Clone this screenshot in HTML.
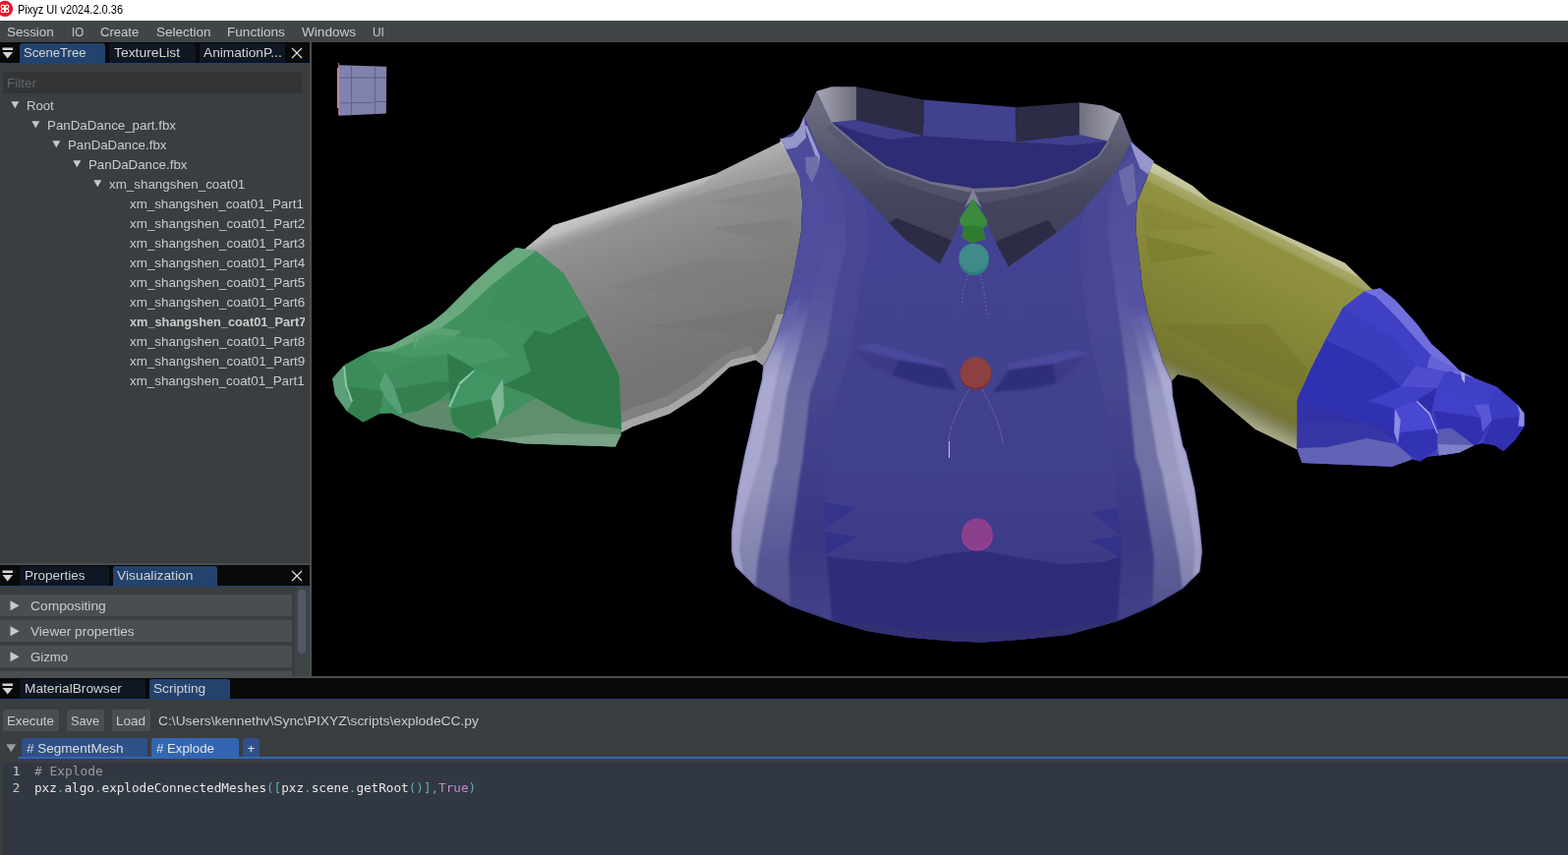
<!DOCTYPE html>
<html><head><meta charset="utf-8"><title>Pixyz UI v2024.2.0.36</title>
<style>
html,body{margin:0;padding:0;background:#3a3e41;}
body{width:1595px;height:870px;position:relative;overflow:hidden;font-family:"Liberation Sans",sans-serif;font-size:14px;color:#cacaca;}
.abs{position:absolute;}
.t{position:absolute;white-space:nowrap;line-height:20px;height:20px;}
#title{left:0;top:0;width:1595px;height:21px;background:#fff;}
#menu{left:0;top:21px;width:1595px;height:22px;background:#404648;}
.tabbar{background:#090909;}
.tab{position:absolute;border-radius:3px 3px 0 0;}
.tab.on{background:#23426d;}
.tab.off{background:#0f1723;}
.line{background:#23426d;}
.panel{background:#3a3e41;}
.sep{background:#4b4e50;}
.hdr{position:absolute;left:0;width:297px;height:22px;background:#4a4e51;border-radius:0 2px 2px 0;}
.btn{position:absolute;top:722px;height:22px;background:#4a4e51;border-radius:2px;}
.tri{position:absolute;width:0;height:0;}
</style></head>
<body>
<div id="title" class="abs"></div>
<svg class="abs" style="left:0;top:0" width="15" height="19" viewBox="0 0 15 19"><circle cx="5" cy="8.9" r="8.1" fill="#e8142c"/><g fill="none" stroke="#fff" stroke-width="1.15"><circle cx="2.9" cy="6.8" r="1.75"/><circle cx="7.1" cy="6.8" r="1.75"/><circle cx="2.9" cy="11" r="1.75"/><circle cx="7.1" cy="11" r="1.75"/><path d="M4.1 8 L5.9 9.8 M5.9 8 L4.1 9.8"/></g></svg>
<div class="t" id="t0" style="left:18.2px;top:0.0px;font-size:12px;color:#000;transform-origin:0 50%;transform:scaleX(0.9166);">Pixyz UI v2024.2.0.36</div>
<div id="menu" class="abs"></div>
<div class="t" id="t1" style="left:7.1px;top:22.6px;font-size:13px;color:#cacaca;transform-origin:0 50%;transform:scaleX(1.0335);">Session</div>
<div class="t" id="t2" style="left:72.6px;top:22.6px;font-size:13px;color:#cacaca;transform-origin:0 50%;transform:scaleX(0.8810);">IO</div>
<div class="t" id="t3" style="left:102.4px;top:22.6px;font-size:13px;color:#cacaca;transform-origin:0 50%;transform:scaleX(1.0043);">Create</div>
<div class="t" id="t4" style="left:158.5px;top:22.6px;font-size:13px;color:#cacaca;transform-origin:0 50%;transform:scaleX(1.0358);">Selection</div>
<div class="t" id="t5" style="left:231.4px;top:22.6px;font-size:13px;color:#cacaca;transform-origin:0 50%;transform:scaleX(1.0448);">Functions</div>
<div class="t" id="t6" style="left:307.2px;top:22.6px;font-size:13px;color:#cacaca;transform-origin:0 50%;transform:scaleX(1.0445);">Windows</div>
<div class="t" id="t7" style="left:379.3px;top:22.6px;font-size:13px;color:#cacaca;transform-origin:0 50%;transform:scaleX(0.9077);">UI</div>
<div class="abs tabbar" style="left:0;top:43px;width:315px;height:21px"></div>
<div class="abs line" style="left:0;top:64px;width:315px;height:1px"></div>
<svg class="abs" style="left:2px;top:48px" width="12" height="13" viewBox="0 0 12 13"><rect x="0.5" y="0.5" width="10.5" height="2.5" fill="#d4d4d4"/><path d="M0.5 5 L11 5 L5.75 11.5 Z" fill="#d4d4d4"/></svg>
<div class="tab on" style="left:20px;top:44px;width:87px;height:20px"></div>
<div class="t" id="t8" style="left:24.2px;top:44.3px;font-size:13px;color:#d2d2d2;transform-origin:0 50%;transform:scaleX(1.0062);">SceneTree</div>
<div class="tab off" style="left:111px;top:44px;width:88px;height:20px"></div>
<div class="t" id="t9" style="left:115.5px;top:44.3px;font-size:13px;color:#d2d2d2;transform-origin:0 50%;transform:scaleX(1.0672);">TextureList</div>
<div class="tab off" style="left:203px;top:44px;width:87px;height:20px"></div>
<div class="t" id="t10" style="left:207.3px;top:44.3px;font-size:13px;color:#d2d2d2;transform-origin:0 50%;transform:scaleX(1.0537);">AnimationP...</div>
<svg class="abs" style="left:295px;top:47px" width="14" height="14" viewBox="0 0 14 14"><path d="M2 2 L12 12 M12 2 L2 12" stroke="#e8e8e8" stroke-width="1.1" fill="none"/></svg>
<div class="abs" style="left:3px;top:73px;width:304px;height:22px;background:#323436;border-radius:2px"></div>
<div class="t" id="t11" style="left:7px;top:74.5px;font-size:13px;color:#616466;transform-origin:0 50%;transform:scaleX(1.0384);">Filter</div>
<div class="abs" style="left:0;top:96px;width:310px;height:302px;overflow:hidden">
<svg class="abs" style="left:11px;top:7px" width="9" height="8" viewBox="0 0 9 8"><path d="M0.3 0.3 L8.3 0.3 L4.3 7.3 Z" fill="#c8c8c8"/></svg>
<div class="t" id="t12" style="left:27.3px;top:1.5px;font-size:13px;color:#cacaca;transform-origin:0 50%;transform:scaleX(1.0084);">Root</div>
<svg class="abs" style="left:32px;top:27px" width="9" height="8" viewBox="0 0 9 8"><path d="M0.3 0.3 L8.3 0.3 L4.3 7.3 Z" fill="#c8c8c8"/></svg>
<div class="t" id="t13" style="left:48.3px;top:21.5px;font-size:13px;color:#cacaca;transform-origin:0 50%;transform:scaleX(1.0241);">PanDaDance_part.fbx</div>
<svg class="abs" style="left:53px;top:47px" width="9" height="8" viewBox="0 0 9 8"><path d="M0.3 0.3 L8.3 0.3 L4.3 7.3 Z" fill="#c8c8c8"/></svg>
<div class="t" id="t14" style="left:69.3px;top:41.5px;font-size:13px;color:#cacaca;transform-origin:0 50%;transform:scaleX(1.0216);">PanDaDance.fbx</div>
<svg class="abs" style="left:74px;top:67px" width="9" height="8" viewBox="0 0 9 8"><path d="M0.3 0.3 L8.3 0.3 L4.3 7.3 Z" fill="#c8c8c8"/></svg>
<div class="t" id="t15" style="left:90.3px;top:61.5px;font-size:13px;color:#cacaca;transform-origin:0 50%;transform:scaleX(1.0216);">PanDaDance.fbx</div>
<svg class="abs" style="left:95px;top:87px" width="9" height="8" viewBox="0 0 9 8"><path d="M0.3 0.3 L8.3 0.3 L4.3 7.3 Z" fill="#c8c8c8"/></svg>
<div class="t" id="t16" style="left:111.3px;top:81.5px;font-size:13px;color:#cacaca;transform-origin:0 50%;transform:scaleX(1.0287);">xm_shangshen_coat01</div>
<div class="t" id="t17" style="left:132.2px;top:101.5px;font-size:13px;color:#cacaca;transform-origin:0 50%;transform:scaleX(1.0235);">xm_shangshen_coat01_Part1</div>
<div class="t" id="t18" style="left:132.2px;top:121.5px;font-size:13px;color:#cacaca;transform-origin:0 50%;transform:scaleX(1.0322);">xm_shangshen_coat01_Part2</div>
<div class="t" id="t19" style="left:132.2px;top:141.5px;font-size:13px;color:#cacaca;transform-origin:0 50%;transform:scaleX(1.0322);">xm_shangshen_coat01_Part3</div>
<div class="t" id="t20" style="left:132.2px;top:161.5px;font-size:13px;color:#cacaca;transform-origin:0 50%;transform:scaleX(1.0322);">xm_shangshen_coat01_Part4</div>
<div class="t" id="t21" style="left:132.2px;top:181.5px;font-size:13px;color:#cacaca;transform-origin:0 50%;transform:scaleX(1.0322);">xm_shangshen_coat01_Part5</div>
<div class="t" id="t22" style="left:132.2px;top:201.5px;font-size:13px;color:#cacaca;transform-origin:0 50%;transform:scaleX(1.0322);">xm_shangshen_coat01_Part6</div>
<div class="t" id="t23" style="left:132.2px;top:221.5px;font-size:13px;color:#cacaca;transform-origin:0 50%;transform:scaleX(0.9808);font-weight:bold;">xm_shangshen_coat01_Part7</div>
<div class="t" id="t24" style="left:132.2px;top:241.5px;font-size:13px;color:#cacaca;transform-origin:0 50%;transform:scaleX(1.0322);">xm_shangshen_coat01_Part8</div>
<div class="t" id="t25" style="left:132.2px;top:261.5px;font-size:13px;color:#cacaca;transform-origin:0 50%;transform:scaleX(1.0322);">xm_shangshen_coat01_Part9</div>
<div class="t" id="t26" style="left:132.2px;top:281.5px;font-size:13px;color:#cacaca;transform-origin:0 50%;transform:scaleX(1.0280);">xm_shangshen_coat01_Part10</div>
</div>
<div class="abs sep" style="left:315px;top:43px;width:2px;height:645px"></div>
<div class="abs sep" style="left:0;top:573px;width:315px;height:2px"></div>
<div class="abs tabbar" style="left:0;top:575px;width:315px;height:21px"></div>
<div class="abs line" style="left:0;top:596px;width:315px;height:1px"></div>
<svg class="abs" style="left:2px;top:580px" width="12" height="13" viewBox="0 0 12 13"><rect x="0.5" y="0.5" width="10.5" height="2.5" fill="#d4d4d4"/><path d="M0.5 5 L11 5 L5.75 11.5 Z" fill="#d4d4d4"/></svg>
<div class="tab off" style="left:20px;top:576px;width:91px;height:20px"></div>
<div class="t" id="t27" style="left:24.5px;top:576.3px;font-size:13px;color:#d2d2d2;transform-origin:0 50%;transform:scaleX(1.0380);">Properties</div>
<div class="tab on" style="left:115px;top:576px;width:106px;height:20px"></div>
<div class="t" id="t28" style="left:119.3px;top:576.3px;font-size:13px;color:#d2d2d2;transform-origin:0 50%;transform:scaleX(1.0637);">Visualization</div>
<svg class="abs" style="left:295px;top:579px" width="14" height="14" viewBox="0 0 14 14"><path d="M2 2 L12 12 M12 2 L2 12" stroke="#e8e8e8" stroke-width="1.1" fill="none"/></svg>
<div class="abs" style="left:300px;top:597px;width:15px;height:91px;background:#3f4447"></div>
<div class="abs" style="left:303px;top:600px;width:8px;height:65px;background:#555769;border-radius:4px"></div>
<div class="hdr" style="top:605px"></div>
<svg class="abs" style="left:9.5px;top:610.5px" width="11" height="11" viewBox="0 0 11 11"><path d="M0.5 0.3 L9.6 5.3 L0.5 10.3 Z" fill="#c8c8c8"/></svg>
<div class="t" id="t29" style="left:31.4px;top:606.5px;font-size:13px;color:#cacaca;transform-origin:0 50%;transform:scaleX(1.0627);">Compositing</div>
<div class="hdr" style="top:631px"></div>
<svg class="abs" style="left:9.5px;top:636.5px" width="11" height="11" viewBox="0 0 11 11"><path d="M0.5 0.3 L9.6 5.3 L0.5 10.3 Z" fill="#c8c8c8"/></svg>
<div class="t" id="t30" style="left:31.4px;top:632.5px;font-size:13px;color:#cacaca;transform-origin:0 50%;transform:scaleX(1.0464);">Viewer properties</div>
<div class="hdr" style="top:657px"></div>
<svg class="abs" style="left:9.5px;top:662.5px" width="11" height="11" viewBox="0 0 11 11"><path d="M0.5 0.3 L9.6 5.3 L0.5 10.3 Z" fill="#c8c8c8"/></svg>
<div class="t" id="t31" style="left:31.4px;top:658.5px;font-size:13px;color:#cacaca;transform-origin:0 50%;transform:scaleX(1.0143);">Gizmo</div>
<div class="hdr" style="top:683px;height:5px;border-radius:0"></div>
<div class="abs sep" style="left:0;top:688px;width:1595px;height:2px"></div>
<div class="abs tabbar" style="left:0;top:690px;width:1595px;height:21px"></div>
<div class="abs line" style="left:0;top:711px;width:1595px;height:1px"></div>
<svg class="abs" style="left:2px;top:695px" width="12" height="13" viewBox="0 0 12 13"><rect x="0.5" y="0.5" width="10.5" height="2.5" fill="#d4d4d4"/><path d="M0.5 5 L11 5 L5.75 11.5 Z" fill="#d4d4d4"/></svg>
<div class="tab off" style="left:20px;top:691px;width:128px;height:20px"></div>
<div class="t" id="t32" style="left:24.5px;top:691.3px;font-size:13px;color:#d2d2d2;transform-origin:0 50%;transform:scaleX(1.0530);">MaterialBrowser</div>
<div class="tab on" style="left:152px;top:691px;width:82px;height:20px"></div>
<div class="t" id="t33" style="left:156.3px;top:691.3px;font-size:13px;color:#d2d2d2;transform-origin:0 50%;transform:scaleX(1.0499);">Scripting</div>
<div class="btn" style="left:3px;width:57px"></div>
<div class="t" id="t34" style="left:7.1px;top:723.5px;font-size:13px;color:#cacaca;transform-origin:0 50%;transform:scaleX(1.0174);">Execute</div>
<div class="btn" style="left:68px;width:38px"></div>
<div class="t" id="t35" style="left:72px;top:723.5px;font-size:13px;color:#cacaca;transform-origin:0 50%;transform:scaleX(0.9784);">Save</div>
<div class="btn" style="left:114px;width:39px"></div>
<div class="t" id="t36" style="left:118px;top:723.5px;font-size:13px;color:#cacaca;transform-origin:0 50%;transform:scaleX(1.0373);">Load</div>
<div class="t" id="t37" style="left:161.3px;top:723.5px;font-size:13px;color:#cacaca;transform-origin:0 50%;transform:scaleX(1.0613);">C:\Users\kennethv\Sync\PIXYZ\scripts\explodeCC.py</div>
<svg class="abs" style="left:6px;top:757px" width="11" height="9" viewBox="0 0 11 9"><path d="M0.3 0.3 L10.3 0.3 L5.3 8.3 Z" fill="#9a9a9a"/></svg>
<div class="tab" style="left:22px;top:751px;width:128px;height:20px;background:#2f5089"></div>
<div class="t" id="t38" style="left:26.5px;top:751.8px;font-size:13px;color:#dcdcdc;transform-origin:0 50%;transform:scaleX(1.0404);"># SegmentMesh</div>
<div class="tab" style="left:154px;top:751px;width:89px;height:20px;background:#3366b2"></div>
<div class="t" id="t39" style="left:158.5px;top:751.8px;font-size:13px;color:#e4e4e4;transform-origin:0 50%;transform:scaleX(1.0185);"># Explode</div>
<div class="tab" style="left:247px;top:751px;width:17px;height:20px;background:#2f5089"></div>
<div class="t" id="t40" style="left:251.5px;top:751.8px;font-size:13px;color:#e4e4e4;">+</div>
<div class="abs" style="left:18px;top:770px;width:1577px;height:1.5px;background:#3366b2"></div>
<div class="abs" style="left:3px;top:776px;width:1592px;height:94px;background:#313842"></div>
<div class="t" id="t41" style="left:12.6px;top:774.9px;font-size:12.9px;color:#c8c8c8;font-family:'DejaVu Sans Mono','Liberation Mono',monospace;">1</div>
<div class="t" id="t42" style="left:12.6px;top:791.5px;font-size:12.9px;color:#c8c8c8;font-family:'DejaVu Sans Mono','Liberation Mono',monospace;">2</div>
<div class="t" id="t43" style="left:35px;top:774.9px;font-size:12.9px;color:#9a9a9a;transform-origin:0 50%;transform:scaleX(0.9977);font-family:'DejaVu Sans Mono','Liberation Mono',monospace;white-space:pre;"># Explode</div>
<div class="t" id="t44" style="left:35px;top:791.5px;font-size:12.9px;color:#e6e6e6;transform-origin:0 50%;transform:scaleX(0.9808);font-family:'DejaVu Sans Mono','Liberation Mono',monospace;">pxz<span style="color:#5fb0b0">.</span>algo<span style="color:#5fb0b0">.</span>explodeConnectedMeshes<span style="color:#5fb0b0">([</span>pxz<span style="color:#5fb0b0">.</span>scene<span style="color:#5fb0b0">.</span>getRoot<span style="color:#5fb0b0">()],</span><span style="color:#c08cc8">True</span><span style="color:#5fb0b0">)</span></div>
<div class="abs" style="left:317px;top:43px;width:1278px;height:645px;background:#000"></div>
<svg class="abs" style="left:317px;top:43px" width="1278" height="645" viewBox="317 43 1278 645" shape-rendering="geometricPrecision"><defs><linearGradient id="gGray" gradientUnits="userSpaceOnUse" x1="652" y1="201" x2="726.4" y2="402.7"><stop offset="0" stop-color="#c4c4c4"/><stop offset="0.025" stop-color="#bcbcbc"/><stop offset="0.05" stop-color="#a6a6a6"/><stop offset="0.09" stop-color="#929292"/><stop offset="0.25" stop-color="#898989"/><stop offset="0.45" stop-color="#808080"/><stop offset="0.6" stop-color="#7b7b7b"/><stop offset="0.8" stop-color="#757575"/><stop offset="0.92" stop-color="#747474"/><stop offset="1" stop-color="#7a7a7a"/></linearGradient><linearGradient id="gYel" gradientUnits="userSpaceOnUse" x1="1290" y1="229" x2="1204.1" y2="398.5"><stop offset="0" stop-color="#c8c8a0"/><stop offset="0.028" stop-color="#c0c096"/><stop offset="0.034" stop-color="#a8a86a"/><stop offset="0.075" stop-color="#a0a05c"/><stop offset="0.085" stop-color="#909242"/><stop offset="0.25" stop-color="#8c8e3e"/><stop offset="0.5" stop-color="#838536"/><stop offset="0.75" stop-color="#7a7c30"/><stop offset="0.88" stop-color="#757534"/><stop offset="0.93" stop-color="#82825a"/><stop offset="1" stop-color="#a8a888"/></linearGradient><linearGradient id="gBody" gradientUnits="userSpaceOnUse" x1="0" y1="150" x2="0" y2="655"><stop offset="0" stop-color="#454496"/><stop offset="0.35" stop-color="#434290"/><stop offset="0.65" stop-color="#41408c"/><stop offset="0.8" stop-color="#3e3c88"/><stop offset="1" stop-color="#38367e"/></linearGradient><clipPath id="cBody"><polygon points="794.0,142.0 800.0,153.0 813.7,180.6 816.2,206.0 815.0,236.0 808.6,271.7 797.2,319.7 788.0,348.0 780.0,366.0 776.3,372.0 775.0,386.0 770.0,406.0 762.4,441.7 757.9,460.0 750.4,498.0 744.0,541.0 744.0,561.0 747.8,576.4 768.0,596.6 803.5,616.8 846.5,632.0 882.0,642.0 922.4,648.5 973.0,652.8 1000.0,653.5 1036.0,651.0 1086.5,646.0 1137.0,632.0 1172.5,616.8 1203.0,599.0 1220.6,581.4 1223.0,561.0 1220.6,536.0 1215.5,498.0 1206.6,460.0 1203.4,454.0 1193.2,403.8 1192.0,387.4 1183.0,368.4 1168.0,320.0 1161.6,290.0 1160.4,276.5 1155.3,233.5 1156.6,205.7 1168.0,177.8 1172.5,164.9 1151.0,143.4 1139.6,115.5 1125.0,125.0 1100.0,130.0 870.0,125.0 840.0,112.0 818.0,118.0 816.8,129.4"/></clipPath><filter id="blur" x="-10%" y="-10%" width="120%" height="120%"><feGaussianBlur stdDeviation="2.2"/></filter><filter id="blur1" x="-10%" y="-10%" width="120%" height="120%"><feGaussianBlur stdDeviation="1.2"/></filter><linearGradient id="gL4" gradientUnits="userSpaceOnUse" x1="0" y1="150" x2="0" y2="640"><stop offset="0" stop-color="#4a4898"/><stop offset="0.5" stop-color="#474690"/><stop offset="0.8" stop-color="#3a3884"/><stop offset="0.9" stop-color="#3e3c84"/><stop offset="1" stop-color="#46448a"/></linearGradient><linearGradient id="gL3" gradientUnits="userSpaceOnUse" x1="0" y1="150" x2="0" y2="620"><stop offset="0" stop-color="#4e4c9a"/><stop offset="0.3" stop-color="#53519c"/><stop offset="0.55" stop-color="#6a6aa2"/><stop offset="0.72" stop-color="#6a6aa0"/><stop offset="0.88" stop-color="#585896"/><stop offset="1" stop-color="#54528e"/></linearGradient><linearGradient id="gL2" gradientUnits="userSpaceOnUse" x1="0" y1="150" x2="0" y2="600"><stop offset="0" stop-color="#4e4c9c"/><stop offset="0.34" stop-color="#524f9e"/><stop offset="0.43" stop-color="#7674b2"/><stop offset="0.52" stop-color="#9494c0"/><stop offset="0.75" stop-color="#9696be"/><stop offset="0.92" stop-color="#8484b0"/><stop offset="1" stop-color="#7e7eaa"/></linearGradient><linearGradient id="gL1" gradientUnits="userSpaceOnUse" x1="0" y1="300" x2="0" y2="600"><stop offset="0" stop-color="#5a58a2"/><stop offset="0.12" stop-color="#6c6aae"/><stop offset="0.21" stop-color="#9a9ac6"/><stop offset="0.3" stop-color="#aaaad2"/><stop offset="0.7" stop-color="#a6a6ce"/><stop offset="0.9" stop-color="#9c9cc6"/><stop offset="1" stop-color="#a4a4cc"/></linearGradient><linearGradient id="gR2" gradientUnits="userSpaceOnUse" x1="0" y1="150" x2="0" y2="600"><stop offset="0" stop-color="#504e9e"/><stop offset="0.36" stop-color="#5553a0"/><stop offset="0.46" stop-color="#7674b2"/><stop offset="0.55" stop-color="#9696c2"/><stop offset="0.75" stop-color="#9a9ac2"/><stop offset="0.92" stop-color="#8a8ab4"/><stop offset="1" stop-color="#8080ac"/></linearGradient><linearGradient id="gR3" gradientUnits="userSpaceOnUse" x1="0" y1="150" x2="0" y2="620"><stop offset="0" stop-color="#4e4c9a"/><stop offset="0.3" stop-color="#5553a0"/><stop offset="0.55" stop-color="#7070a6"/><stop offset="0.72" stop-color="#7070a5"/><stop offset="0.88" stop-color="#5e5e98"/><stop offset="1" stop-color="#56548e"/></linearGradient><linearGradient id="gCL" gradientUnits="userSpaceOnUse" x1="830" y1="0" x2="872" y2="0"><stop offset="0" stop-color="#a6a6b4"/><stop offset="0.45" stop-color="#8c8c9c"/><stop offset="1" stop-color="#6a6a7c"/></linearGradient><linearGradient id="gCR" gradientUnits="userSpaceOnUse" x1="1098" y1="0" x2="1140" y2="0"><stop offset="0" stop-color="#6e6e80"/><stop offset="0.5" stop-color="#8a8a98"/><stop offset="1" stop-color="#a2a2b0"/></linearGradient><linearGradient id="gCol" gradientUnits="userSpaceOnUse" x1="0" y1="110" x2="0" y2="270"><stop offset="0" stop-color="#6c6c80"/><stop offset="0.3" stop-color="#55556c"/><stop offset="0.55" stop-color="#45455e"/><stop offset="1" stop-color="#3e3e58"/></linearGradient></defs><polygon points="534.0,253.0 563.0,229.0 576.0,225.0 652.0,201.0 728.0,177.0 793.0,145.0 795.0,141.0 800.0,153.0 813.7,180.6 816.2,206.0 815.0,236.0 808.6,271.7 797.2,319.7 788.0,348.0 780.0,366.0 776.3,372.0 768.7,366.3 742.0,373.4 712.0,401.0 681.0,421.0 643.5,434.0 631.0,440.4 600.0,400.0 560.0,300.0" fill="url(#gGray)" /><polygon points="724.0,232.0 806.0,222.0 803.0,250.0 790.0,248.0" fill="#7e7e7e" opacity="0.8"/><polygon points="722.0,205.0 808.0,190.0 811.0,212.0 770.0,212.0" fill="#868686" opacity="0.7"/><polygon points="620.0,292.0 720.0,262.0 810.0,270.0 800.0,305.0 700.0,300.0" fill="#7c7c7c" opacity="0.5"/><polygon points="660.0,332.0 790.0,312.0 786.0,345.0 730.0,337.0" fill="#727272" opacity="0.5"/><polygon points="728.0,177.0 793.0,145.0 800.0,153.0 810.0,175.0 760.0,185.0 700.0,200.0" fill="#a2a2a2" opacity="0.7"/><polygon points="631.0,440.4 643.5,434.0 681.0,421.0 712.0,401.0 742.0,373.4 768.7,366.3 764.0,352.0 738.0,360.0 706.0,385.0 676.0,404.0 640.0,416.0 631.0,420.0" fill="#858585" opacity="0.7"/><polygon points="631.0,440.4 643.5,434.0 681.0,421.0 712.0,401.0 742.0,373.4 768.7,366.3 776.3,372.0 770.0,360.0 744.0,366.0 712.0,393.0 680.0,413.0 643.0,426.0 631.0,431.0" fill="#a6a6a6" /><polygon points="776.3,372.0 780.0,366.0 788.0,348.0 797.2,319.7 790.0,320.0 780.0,348.0 768.0,362.0" fill="#9a9a9a" /><polygon points="524.8,252.1 545.0,255.2 572.9,278.0 598.2,321.0 615.9,353.8 629.8,381.7 632.3,439.9 626.0,454.5 532.4,451.2 486.8,444.9 480.0,446.6 469.5,440.6 459.1,438.4 427.7,433.1 405.3,423.4 397.8,420.4 385.8,420.9 369.4,429.4 352.9,418.2 341.0,401.7 338.3,385.3 350.2,371.5 375.5,357.6 398.3,351.3 418.5,339.9 438.8,328.5 454.0,315.9 481.8,288.1 507.1,265.3" fill="#409060" /><polygon points="524.8,252.1 545.0,255.2 500.0,290.0 470.0,318.0 440.0,340.0 400.0,358.0 375.5,357.6 398.3,351.3 418.5,339.9 438.8,328.5 454.0,315.9 481.8,288.1 507.1,265.3" fill="#6aa87e" /><polygon points="572.9,278.0 598.2,321.0 615.9,353.8 629.8,381.7 632.3,437.0 575.0,425.0 540.0,402.0 512.0,392.0 540.0,378.0 532.0,351.0 560.0,318.0" fill="#2f7a4a" /><polygon points="545.0,255.2 572.9,278.0 598.2,321.0 560.0,340.0 520.0,330.0 490.0,322.0 510.0,290.0" fill="#3f8f5c" /><polygon points="632.3,437.0 626.0,454.5 532.4,451.2 486.8,444.9 500.0,436.0 512.0,425.0 545.0,405.0 590.0,430.0" fill="#5f8f6c" /><polygon points="632.3,442.0 626.0,454.5 532.4,451.2 505.0,447.0 560.0,441.0" fill="#7aa286" /><polygon points="405.3,423.4 424.7,418.2 445.6,407.7 456.1,407.7 456.1,413.7 460.6,431.6 469.5,440.6 459.1,438.4 427.7,433.1" fill="#5f8a6c" /><polygon points="338.3,385.3 350.0,372.0 372.0,360.0 392.0,385.0 386.0,420.0 369.4,429.4 352.9,418.2 341.0,401.7" fill="#3c8c5a" /><polygon points="352.0,393.0 390.0,398.0 386.0,420.9 369.4,429.4 352.9,418.2" fill="#347e4f" /><polygon points="338.3,385.3 349.0,373.0 351.0,390.0 353.0,400.0 358.0,410.0 352.9,418.2 341.0,401.7" fill="#5c9f78" /><polygon points="349.0,373.0 351.0,373.0 353.0,392.0 359.0,408.0 357.0,409.0 351.0,392.0" fill="#8ec6a6" /><polygon points="386.0,393.0 400.0,375.0 455.0,360.0 467.0,390.0 445.6,407.7 424.7,418.2 406.7,421.2" fill="#3f8c5c" /><polygon points="396.0,397.0 445.0,388.0 467.0,390.0 445.6,407.7 424.7,418.2 406.7,421.2" fill="#347e4f" /><polygon points="385.8,392.8 392.0,378.0 400.0,392.0 410.0,420.0 406.7,421.2 392.0,405.0" fill="#57a076" /><polygon points="455.0,360.0 483.0,375.6 466.5,389.8 458.0,408.0" fill="#2f7a4a" /><polygon points="466.5,389.8 483.0,375.6 511.4,383.8 512.9,413.7 505.4,433.1 493.4,439.1 480.0,445.8 460.6,431.6 456.1,413.7" fill="#419563" /><polygon points="458.0,416.0 500.0,406.0 505.4,433.1 493.4,439.1 480.0,445.8 460.6,431.6" fill="#33804e" /><polygon points="499.4,404.7 511.4,385.3 512.9,413.7 505.4,433.1" fill="#7fb594" /><polygon points="466.5,389.8 483.0,375.6 481.5,379.0 468.0,391.5" fill="#8ec6a6" /><polygon points="456.1,413.7 466.5,391.0 468.0,392.5 458.0,414.5" fill="#8ec6a6" /><polygon points="421.0,343.0 447.0,333.0 470.0,337.0 455.0,347.0 423.0,355.0" fill="#5aa274" /><polygon points="420.0,352.0 424.0,345.0 426.0,347.0 421.0,356.0" fill="#8ec6a6" /><polygon points="395.0,358.0 440.0,340.0 500.0,345.0 520.0,362.0 480.0,372.0 455.0,360.0 420.0,364.0" fill="#4a9a68" opacity="0.8"/><polygon points="1172.5,165.0 1213.0,189.0 1231.0,204.4 1282.0,228.4 1332.0,251.0 1368.0,267.6 1395.6,294.2 1400.0,300.0 1380.0,340.0 1350.0,400.0 1330.0,457.0 1318.5,457.0 1276.7,436.7 1243.8,409.0 1218.5,386.0 1198.0,381.0 1192.0,387.4 1183.0,368.4 1168.0,320.0 1161.6,290.0 1160.4,276.5 1155.3,233.5 1156.6,205.7 1168.0,177.8" fill="url(#gYel)" /><polygon points="1165.0,240.0 1237.0,258.0 1170.0,268.0" fill="#7c7e2e" opacity="0.8"/><polygon points="1160.0,205.0 1240.0,232.0 1165.0,235.0" fill="#848636" opacity="0.6"/><polygon points="1180.0,330.0 1290.0,330.0 1330.0,375.0 1322.0,400.0 1250.0,370.0" fill="#74742e" opacity="0.5"/><polygon points="1387.6,296.4 1404.0,293.2 1419.2,305.3 1442.0,330.6 1456.2,350.0 1469.7,362.0 1484.6,376.9 1499.6,384.4 1522.0,393.3 1542.9,411.3 1550.4,420.3 1550.4,433.7 1541.4,447.2 1529.5,459.1 1520.5,453.1 1508.5,450.9 1499.6,453.1 1484.6,460.6 1463.7,463.6 1451.7,465.1 1444.3,469.6 1436.8,467.3 1415.9,474.8 1324.3,471.0 1319.3,457.1 1320.5,404.0 1333.2,376.1 1348.4,345.8 1366.1,312.9" fill="#4040c4" /><polygon points="1387.6,296.4 1404.0,293.2 1419.2,305.3 1442.0,330.6 1456.2,350.0 1469.7,362.0 1484.6,376.9 1499.6,384.4 1480.0,380.0 1462.0,368.0 1445.0,350.0 1420.0,322.0 1400.0,302.0" fill="#7070dc" /><polygon points="1454.7,362.0 1484.6,376.9 1469.7,378.4 1451.7,373.9" fill="#6464d6" /><polygon points="1438.3,372.4 1469.7,378.4 1462.2,394.8 1424.8,393.3" fill="#4e4ecf" /><polygon points="1348.4,345.8 1400.0,370.0 1425.0,393.0 1392.0,408.0 1418.9,415.8 1418.0,440.0 1385.0,428.0 1319.3,408.0 1320.5,404.0 1333.2,376.1" fill="#3030b2" /><polygon points="1366.1,312.9 1420.0,345.0 1440.0,372.0 1425.0,393.0 1400.0,370.0 1348.4,345.8" fill="#3c3cbe" /><polygon points="1319.3,408.0 1385.0,428.0 1418.0,440.0 1421.9,451.6 1390.5,430.7 1319.3,430.0" fill="#3232a6" /><polygon points="1319.3,430.0 1390.5,430.7 1418.9,451.6 1432.3,462.1 1436.8,467.3 1415.9,474.8 1324.3,471.0 1319.3,457.1" fill="#3636a4" /><polygon points="1319.3,456.0 1350.0,455.0 1390.0,446.0 1418.9,451.6 1432.3,462.1 1436.8,467.3 1415.9,474.8 1324.3,471.0" fill="#6262b6" /><polygon points="1463.0,436.7 1475.7,435.2 1490.6,445.7 1499.6,453.1 1484.6,460.6 1463.7,463.6 1461.5,457.6" fill="#5a5ab0" /><polygon points="1463.0,452.0 1499.6,453.1 1484.6,460.6 1463.7,463.6" fill="#8080c8" /><polygon points="1418.9,415.8 1441.3,407.5 1454.7,420.3 1463.0,441.2 1461.5,457.6 1444.3,469.6 1432.3,462.1 1421.9,451.6" fill="#4848d2" /><polygon points="1424.8,440.0 1462.0,436.0 1461.5,457.6 1444.3,469.6 1432.3,462.1 1421.9,451.6" fill="#3232b4" /><polygon points="1418.9,415.8 1424.8,427.7 1421.9,451.6 1418.1,439.7" fill="#8c8ce4" /><polygon points="1441.3,407.5 1461.5,394.8 1456.0,420.0 1463.0,441.2 1454.7,420.3" fill="#2e2eaa" /><polygon points="1441.3,407.5 1454.7,420.3 1463.0,441.2 1461.5,441.0 1453.5,421.5 1441.0,409.0" fill="#a8a8ec" /><polygon points="1461.5,394.8 1514.5,411.3 1517.5,427.7 1505.6,448.7 1499.6,453.1 1490.6,445.7 1475.7,435.2 1463.0,436.7 1456.0,420.0" fill="#4040c8" /><polygon points="1458.0,418.0 1500.0,424.0 1517.5,427.7 1505.6,448.7 1499.6,453.1 1490.6,445.7 1475.7,435.2 1463.0,436.7" fill="#3030b0" /><polygon points="1500.0,412.0 1514.5,411.3 1517.5,427.7 1508.0,440.0 1506.0,424.0" fill="#5858d4" /><polygon points="1514.5,411.3 1522.0,393.3 1542.9,411.3 1550.4,420.3 1550.4,433.7 1541.4,447.2 1529.5,459.1 1520.5,453.1 1508.5,450.9 1517.5,427.7" fill="#3c3cc2" /><polygon points="1517.5,427.7 1545.0,424.0 1550.4,433.7 1541.4,447.2 1529.5,459.1 1520.5,453.1 1508.5,450.9" fill="#3030b0" /><polygon points="1542.9,411.3 1550.4,420.3 1550.4,433.7 1544.4,433.7 1545.9,420.3" fill="#8c8ce0" /><polygon points="1486.0,378.0 1490.0,380.0 1490.0,390.0 1487.0,386.0" fill="#a8a8ec" /><polygon points="794.0,142.0 800.0,153.0 813.7,180.6 816.2,206.0 815.0,236.0 808.6,271.7 797.2,319.7 788.0,348.0 780.0,366.0 776.3,372.0 775.0,386.0 770.0,406.0 762.4,441.7 757.9,460.0 750.4,498.0 744.0,541.0 744.0,561.0 747.8,576.4 768.0,596.6 803.5,616.8 846.5,632.0 882.0,642.0 922.4,648.5 973.0,652.8 1000.0,653.5 1036.0,651.0 1086.5,646.0 1137.0,632.0 1172.5,616.8 1203.0,599.0 1220.6,581.4 1223.0,561.0 1220.6,536.0 1215.5,498.0 1206.6,460.0 1203.4,454.0 1193.2,403.8 1192.0,387.4 1183.0,368.4 1168.0,320.0 1161.6,290.0 1160.4,276.5 1155.3,233.5 1156.6,205.7 1168.0,177.8 1172.5,164.9 1151.0,143.4 1139.6,115.5 1125.0,125.0 1100.0,130.0 870.0,125.0 840.0,112.0 818.0,118.0 816.8,129.4" fill="url(#gBody)" /><polygon points="803.0,540.0 838.0,566.0 874.0,570.0 920.0,573.0 960.0,564.0 994.5,560.0 1040.6,568.0 1080.8,574.0 1121.0,572.0 1141.0,566.0 1174.0,545.0 1174.0,590.0 1172.5,616.8 1137.0,632.0 1086.5,646.0 1036.0,651.0 1000.0,653.5 973.0,652.8 922.4,648.5 882.0,642.0 846.5,632.0 803.5,616.8" fill="#2f2d7a" /><polygon points="846.5,632.0 882.0,635.0 922.4,640.0 973.0,644.0 1036.0,643.0 1086.5,638.0 1137.0,632.0 1086.5,646.0 1036.0,651.0 1000.0,653.5 973.0,652.8 922.4,648.5 882.0,642.0" fill="#322f72" /><g filter="url(#blur1)"><polygon points="914.2,366.0 960.4,374.0 972.4,397.0 940.0,392.0 907.2,382.0" fill="#2e2d7a" /><polygon points="1026.6,376.0 1070.7,370.0 1074.7,390.0 1045.0,396.0 1010.5,399.0" fill="#2e2d7a" /><polygon points="870.0,352.0 891.8,350.0 960.0,370.0 960.4,374.0 914.2,366.0" fill="#4b4a9e" /><polygon points="1026.6,376.0 1023.0,371.0 1090.0,356.0 1108.8,359.0 1095.0,364.0 1070.7,370.0" fill="#4b4a9e" /><polygon points="868.0,356.0 914.2,366.0 907.2,382.0 885.0,372.0" fill="#3c3b88" /><polygon points="1070.7,370.0 1100.0,362.0 1090.0,380.0 1074.7,390.0" fill="#3c3b88" /></g><polygon points="838.0,511.0 872.0,517.0 838.0,538.0" fill="#35348a" /><polygon points="838.0,541.0 872.0,546.0 838.0,565.0" fill="#33328a" /><polygon points="1110.0,522.0 1140.0,516.0 1141.0,545.0" fill="#35348a" /><polygon points="1110.0,550.0 1141.0,545.0 1141.0,568.0" fill="#33328a" /><g clip-path="url(#cBody)"><g filter="url(#blur1)"><polygon points="794.0,142.0 800.0,153.0 813.7,180.6 816.2,206.0 815.0,236.0 808.6,271.7 797.2,319.7 788.0,348.0 780.0,366.0 776.3,372.0 775.0,386.0 770.0,406.0 762.4,441.7 757.9,460.0 750.4,498.0 744.0,541.0 744.0,561.0 747.8,576.4 768.0,596.6 803.5,616.8 846.5,632.0 839.0,545.0 838.0,500.0 842.0,440.0 852.0,400.0 866.0,351.0 874.0,300.0 884.0,250.0 880.0,200.0 862.0,165.0 840.0,140.0" fill="url(#gL4)" /><polygon points="794.0,142.0 800.0,153.0 813.7,180.6 816.2,206.0 815.0,236.0 808.6,271.7 797.2,319.7 788.0,348.0 780.0,366.0 776.3,372.0 775.0,386.0 770.0,406.0 762.4,441.7 757.9,460.0 750.4,498.0 744.0,541.0 744.0,561.0 747.8,576.4 768.0,596.6 804.0,615.0 802.0,567.0 814.0,480.0 816.0,470.0 823.5,402.0 841.0,351.0 849.0,300.0 861.0,250.0 858.0,205.0 845.0,170.0 826.0,140.0" fill="url(#gL3)" /><polygon points="794.0,142.0 800.0,153.0 813.7,180.6 816.2,206.0 815.0,236.0 808.6,271.7 797.2,319.7 788.0,348.0 780.0,366.0 776.3,372.0 775.0,386.0 770.0,406.0 762.4,441.7 757.9,460.0 750.4,498.0 744.0,541.0 744.0,561.0 747.8,576.4 768.0,596.6 768.0,597.0 771.0,567.0 787.0,480.0 790.6,470.0 800.0,402.0 813.0,351.0 826.0,300.0 836.0,275.0 838.0,236.0 836.0,205.0 828.0,175.0 815.0,150.0" fill="url(#gL2)" /><polygon points="797.2,319.7 788.0,348.0 780.0,366.0 776.3,372.0 775.0,386.0 770.0,406.0 762.4,441.7 757.9,460.0 750.4,498.0 744.0,541.0 744.0,561.0 747.8,576.4 756.0,585.0 752.0,560.0 755.0,530.0 769.0,480.0 772.0,470.0 783.0,420.0 790.0,385.0 796.0,360.0 806.0,330.0 815.0,300.0" fill="url(#gL1)" /><polygon points="1172.5,164.9 1168.0,177.8 1156.6,205.7 1155.3,233.5 1160.4,276.5 1161.6,290.0 1168.0,320.0 1183.0,368.4 1192.0,387.4 1193.2,403.8 1203.4,454.0 1206.6,460.0 1215.5,498.0 1220.6,536.0 1223.0,561.0 1220.6,581.4 1203.0,599.0 1172.5,616.8 1137.0,632.0 1141.0,561.0 1134.0,480.0 1132.0,460.0 1122.0,400.0 1108.0,340.0 1100.0,280.0 1100.0,230.0 1108.0,190.0 1128.0,160.0" fill="url(#gL4)" /><polygon points="1172.5,164.9 1168.0,177.8 1156.6,205.7 1155.3,233.5 1160.4,276.5 1161.6,290.0 1168.0,320.0 1183.0,368.4 1192.0,387.4 1193.2,403.8 1203.4,454.0 1206.6,460.0 1215.5,498.0 1220.6,536.0 1223.0,561.0 1220.6,581.4 1203.0,599.0 1172.5,616.8 1174.0,567.0 1160.0,480.0 1155.0,467.0 1146.0,376.0 1135.0,300.0 1127.0,238.0 1128.0,200.0 1138.0,175.0 1150.0,155.0" fill="url(#gR3)" /><polygon points="1172.5,164.9 1168.0,177.8 1156.6,205.7 1155.3,233.5 1160.4,276.5 1161.6,290.0 1168.0,320.0 1183.0,368.4 1192.0,387.4 1193.2,403.8 1203.4,454.0 1206.6,460.0 1215.5,498.0 1220.6,536.0 1223.0,561.0 1220.6,581.4 1203.0,599.0 1203.0,599.0 1199.0,567.0 1182.0,480.0 1178.0,467.0 1170.0,420.0 1163.0,376.0 1152.0,330.0 1146.0,300.0 1142.0,260.0 1142.0,230.0 1146.0,200.0 1160.0,172.0" fill="url(#gR2)" /><polygon points="1168.0,320.0 1183.0,368.4 1192.0,387.4 1193.2,403.8 1203.4,454.0 1206.6,460.0 1215.5,498.0 1220.6,536.0 1223.0,561.0 1220.6,581.4 1214.0,590.0 1216.0,560.0 1210.0,520.0 1200.0,480.0 1192.0,440.0 1186.0,410.0 1180.0,385.0 1172.0,360.0 1160.0,320.0" fill="url(#gL1)" /></g></g><polygon points="793.0,141.5 806.0,139.0 813.0,130.0 818.0,118.0 820.0,140.0 810.0,150.0 800.0,152.0" fill="#9696cc" /><polygon points="818.0,128.0 821.0,128.0 834.0,159.0 833.0,168.0 830.0,160.0" fill="#9a9acc" /><polygon points="819.0,160.0 832.0,159.0 833.0,170.0 826.0,186.0 820.0,175.0" fill="#6e6eaa" /><polygon points="1149.7,144.6 1173.8,164.1 1168.0,177.5 1159.8,171.2 1153.5,156.0" fill="#9696cc" /><polygon points="1138.0,174.0 1153.0,166.0 1156.0,203.0 1147.0,210.0 1141.0,192.0" fill="#6a6aa8" /><polygon points="845.9,124.4 871.2,121.9 939.5,138.3 1033.0,144.6 1097.9,137.0 1127.0,143.4 1116.8,158.5 1091.5,173.7 1061.2,183.8 1030.8,190.2 990.4,191.4 947.0,185.0 901.5,168.7 871.2,145.9" fill="#2d2c74" /><polygon points="845.9,124.4 871.2,121.9 939.5,138.3 905.0,142.0 875.0,135.0" fill="#403f8e" /><polygon points="1033.0,144.6 1097.9,137.0 1127.0,143.4 1090.0,148.0" fill="#403f8e" /><polygon points="871.2,88.2 939.5,101.6 939.5,138.3 871.2,121.9" fill="#2d2c46" /><polygon points="939.5,101.6 1033.4,109.2 1033.4,144.6 939.5,138.3" fill="#42418e" /><polygon points="1033.4,109.2 1097.9,104.2 1097.9,137.0 1033.4,144.6" fill="#2d2c46" /><polygon points="830.7,92.8 845.9,88.2 871.2,88.2 871.2,121.9 845.9,124.4 824.4,108.0" fill="url(#gCL)" /><polygon points="1097.9,104.2 1121.9,107.4 1139.6,115.5 1147.0,135.0 1127.0,143.4 1097.9,137.0" fill="url(#gCR)" /><polygon points="830.7,92.8 824.4,108.0 818.0,118.0 833.2,151.0 853.5,173.7 881.3,201.5 904.0,226.8 921.8,244.5 955.9,268.6 970.9,238.8 986.7,199.0 989.8,192.0 987.5,191.0 947.0,185.0 901.5,168.7 871.2,145.9 845.9,124.4" fill="url(#gCol)" /><polygon points="989.8,192.0 993.0,199.0 1009.4,239.4 1025.8,271.6 1068.5,242.0 1096.6,219.3 1116.8,196.5 1137.0,171.2 1151.0,143.4 1147.0,135.0 1139.6,115.5 1127.0,143.4 1116.8,158.5 1091.5,173.7 1061.2,183.8 1030.8,190.2" fill="url(#gCol)" /><polygon points="912.0,222.0 968.0,244.5 955.9,268.6 921.8,244.5 904.0,226.8" fill="#2d2c46" /><polygon points="1012.5,246.0 1066.0,224.0 1075.0,236.0 1025.8,271.6" fill="#2d2c46" /><polygon points="845.9,124.4 871.2,145.9 901.5,168.7 947.0,185.0 987.5,191.0 989.8,192.0 1030.8,190.2 1061.2,183.8 1091.5,173.7 1116.8,158.5 1127.0,143.4 1129.0,144.5 1118.0,160.0 1092.5,175.7 1061.8,186.0 1031.0,192.6 994.0,196.0 989.8,194.0 985.0,195.5 946.5,187.5 900.5,171.0 870.0,148.0 845.0,126.5" fill="#70708a" /><polygon points="845.0,126.5 870.0,148.0 900.5,171.0 946.5,187.5 985.0,195.5 989.8,194.0 994.0,196.0 1031.0,192.6 1061.8,186.0 1092.5,175.7 1118.0,160.0 1129.0,144.5 1133.0,147.0 1121.0,166.0 1094.0,183.0 1062.0,194.0 1031.0,201.0 1000.0,207.0 989.8,198.0 979.0,206.0 945.0,196.0 898.0,180.0 866.0,156.0 841.0,131.0" fill="#56566e" opacity="0.7"/><polygon points="989.8,192.0 981.0,211.6 989.8,203.0 998.7,211.6" fill="#828298" /><polygon points="989.8,202.1 975.9,223.6 977.2,228.7 980.3,230.6 978.4,241.3 987.9,247.6 1002.5,243.2 999.9,231.8 1004.4,228.7 1003.7,223.6" fill="#3a8c3c" /><polygon points="980.3,230.6 978.4,241.3 987.9,247.6 1002.5,243.2 999.9,231.8 990.0,229.0" fill="#2f7c30" /><ellipse cx="990.7" cy="265.5" rx="15.2" ry="14.4" fill="#327e7e"/><ellipse cx="990.7" cy="262.3" rx="15.2" ry="14.6" fill="#408a8a"/><ellipse cx="992.5" cy="382" rx="15.7" ry="14.5" fill="#7a3034"/><circle cx="992.5" cy="379" r="15.7" fill="#8c4042"/><ellipse cx="994" cy="546" rx="15.7" ry="14.5" fill="#a0409a"/><circle cx="994" cy="543.3" r="15.7" fill="#8c408c"/><path d="M985 280 Q978 295 979 309 M997 280 Q1003 300 1004 323" stroke="#d8d8e8" stroke-width="0.6" stroke-dasharray="0.8 3.2" fill="none"/><path d="M986 396 Q966 430 965 448 M999 396 Q1018 430 1020 452" stroke="#d8d8e8" stroke-width="0.6" stroke-dasharray="0.8 1.6" fill="none"/><path d="M965.5 449 L965.5 466" stroke="#e8e8f4" stroke-width="0.8" fill="none"/><polygon points="343.0,69.0 344.9,69.0 344.9,110.0 343.0,110.0" fill="#c09090" /><polygon points="344.1,64.0 344.9,64.0 344.9,117.5 344.1,117.0" fill="#c09090" /><polygon points="344.9,66.3 393.2,67.7 392.8,115.5 344.9,117.8" fill="#8282ae" /><path d="M357.4 66.6 L357.4 117.2 M381.3 67.4 L381.3 116 M344.9 79.1 L393 79.1 M346 104.8 L380 104.4 M381.3 103.5 L392.8 103.5" stroke="#5c5c84" stroke-width="0.9" fill="none"/></svg>
</body></html>
